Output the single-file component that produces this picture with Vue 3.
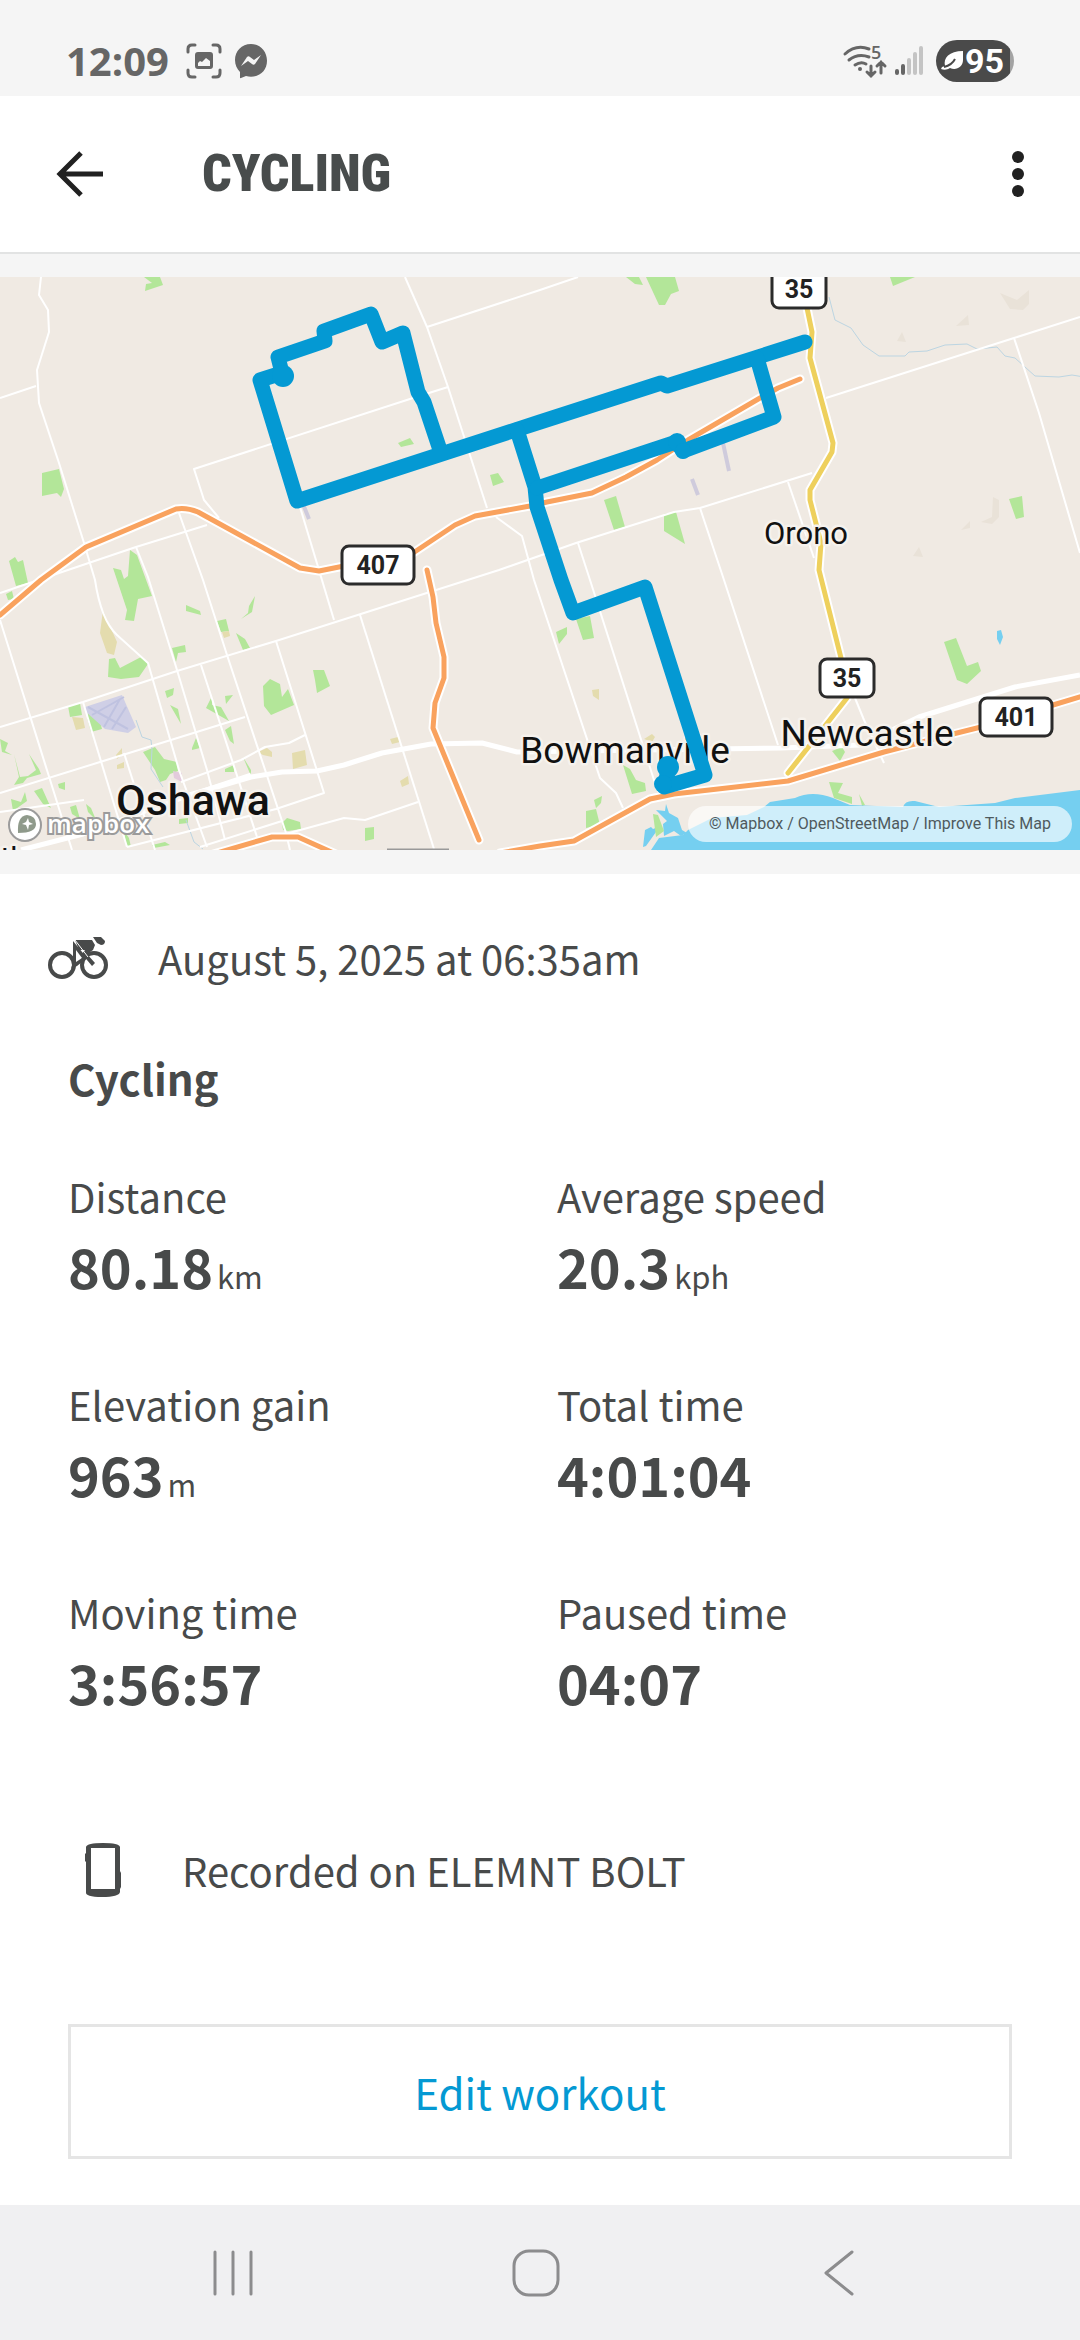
<template>
  <div class="screen">
    <div class="status-bar">
      <span class="clock">12:09</span>
      <svg class="icon-capture" viewBox="0 0 36 36" aria-hidden="true">
        <g fill="none" stroke="#666" stroke-width="3" stroke-linecap="round">
          <path d="M2 9V6q0-4 4-4h3M27 2h3q4 0 4 4v3M34 27v3q0 4-4 4h-3M9 34H6q-4 0-4-4v-3" />
        </g>
        <path fill="#666" fill-rule="evenodd" d="M12 9h12q3 0 3 3v11q0 3-3 3H12q-3 0-3-3V12q0-3 3-3zM12 23h12v-5l-4-3-4 4-2-1-2 2z" />
      </svg>
      <svg class="icon-messenger" viewBox="0 0 34 36" aria-hidden="true">
        <path fill="#666" d="M17 1C7.500 1 1 8 1 17c0 5 2 9 5 12v5.500q0 1 1 .5l5-2q2.500.7 5 .7c9.500 0 16-7 16-16S26.500 1 17 1z" />
        <path fill="#f5f5f5" d="M7 23l6-9q1.500-1.500 3 0l4 3 7-5-6 9q-1.500 1.500-3 0l-4-3z" />
      </svg>
      <span class="spacer"></span>
      <svg class="icon-wifi" viewBox="0 0 44 34" aria-hidden="true">
        <g fill="none" stroke="#666" stroke-width="3" stroke-linecap="round">
          <path d="M2 10Q13 0 26 5M6 16q9-7 20-3M12 21q6-4 11-1" />
          <path d="M28 22v10M24 28l4 4 4-4M38 29V18M34 22l4-4 4 4" />
        </g>
        <circle cx="17" cy="25" r="2" fill="#666" />
        <text x="28" y="15" class="wifi-band">5</text>
      </svg>
      <svg class="icon-signal" viewBox="0 0 28 30" aria-hidden="true">
        <path stroke="#666" stroke-width="4" stroke-linecap="round" d="M2 25v2M8 20v7" />
        <path stroke="#c4c4c4" stroke-width="4" stroke-linecap="round" d="M14 14v13M20 8v19M26 2v25" />
      </svg>
      <span class="battery">
        <svg viewBox="0 0 24 22" aria-hidden="true">
          <path fill="#fff" d="M22 1v9c0 7-7 11-13 8-3 2-6 2-9 1l1-2 3-1C2 8 8 1 22 1z" />
          <path fill="none" stroke="#4a4a4a" stroke-width="2" d="M3 17q8-2 11-8" />
        </svg>95
      </span>
    </div>

    <header class="app-bar">
      <button class="icon-button" type="button" aria-label="Back">
        <svg viewBox="0 0 48 48" class="icon-back">
          <path fill="none" stroke="#212121" stroke-width="5" d="M25 3L4 24l21 21M4 24h43" />
        </svg>
      </button>
      <h1>CYCLING</h1>
      <button class="icon-button" type="button" aria-label="More options">
        <svg viewBox="0 0 12 48" class="icon-more" fill="#212121">
          <circle cx="6" cy="7" r="6" />
          <circle cx="6" cy="24" r="6" />
          <circle cx="6" cy="41" r="6" />
        </svg>
      </button>
    </header>

    <section class="map">
      <svg class="map-canvas" viewBox="0 0 1080 573" role="img" aria-label="Route map">
        <rect width="1080" height="573" fill="#f0eae3" />

        <g fill="#b3e699">
          <path v-for="d in parks" :key="d" :d="d" />
        </g>
        <g fill="#e4dcae">
          <path v-for="d in fields" :key="d" :d="d" />
        </g>
        <g fill="#e9e2d8">
          <path d="M1000 16l17 7 12-10v14l-6 6-13-1zM956 49l12-11 1 10zM897 64l5-9 4 10zM981 245l11-5 1-20 6 3v17l-7 7zM961 253l9-9v7zM913 279l6-9 4 10z" />
        </g>
        <path fill="#cfcfe6" d="M85 430l37-12 14 32-8 6-23-4-20-18z" />
        <path fill="none" stroke="#bfc2e0" stroke-width="2" d="M88 430l40 22M92 438l32-18M104 450l16-28M112 452l14-22" />
        <path fill="none" stroke="#cfcbdc" stroke-width="4" d="M303 227l6 15M723 166l6 28M692 202l6 16" />
        <path fill="#e3cbdc" d="M173 494l9 2v9l-8-4z" />

        <g class="creek">
          <path d="M829 20l6 23 16 8 12 17 16 11h26l4-4 18-1 18-6 22-1 10 5 20-2 8 9 10 2 20 18 24 1 13-2 18 3" />
          <path d="M136 443l6 17 9 3 1 9-1 20 12 18M186 543l8 22 9 7" />
        </g>

        <g class="water">
          <path d="M651 573l8-12 24-3 5-5 24-12 35-3 17-8 6-5 25-4q17-8 38 0l17 7 53 2q2-7 12-6l24 6 56-4 20-5 65-8v60z" />
          <path d="M643 570l2-17 6-3 2 2 5-2-2 5-10 14zM656 533l9 1 1-7 3 9 9 5 4 12 5 3-6 3-7-5-10 5-1-12 4-3z" />
          <path d="M997 354l4-1 2 7-3 8-3-6z" />
        </g>
        <path fill="#b3e699" d="M653 537l5 1 6 16-8 6z" />
        <path fill="#b3e699" d="M829 505l14 1-5 10 14 4v7l-18-6z" />

        <g class="streets">
          <path v-for="d in streets" :key="d" :d="d" />
        </g>
        <g class="avenues">
          <path d="M21 573l62-16 103-38 65-19 31-5 35-1 27-6 38-12 49-9 51-1 35 9 60-1 204-3h0l80-3 58-28 96-30 65-12" />
          <path d="M155 530l96-32" />
        </g>

        <g v-for="road in highways" :key="road.d">
          <path class="casing" :d="road.d" />
          <path class="road" :class="road.kind" :d="road.d" />
        </g>

        <g class="town" text-anchor="middle">
          <text x="806" y="267" class="town-small">Orono</text>
          <text x="625" y="486">Bowmanville</text>
          <text x="867" y="469">Newcastle</text>
          <text x="193" y="538" class="town-large">Oshawa</text>
          <text x="10" y="592" class="town-small">ith</text>
        </g>
        <path stroke="#999" stroke-width="3" d="M387 573h62" />

        <g v-for="s in shields" :key="s.x" class="shield">
          <rect :x="s.x - s.w / 2" :y="s.y - 19" :width="s.w" height="38" rx="7" />
          <text :x="s.x" :y="s.y + 9" text-anchor="middle">{{ s.label }}</text>
        </g>

        <g class="route">
          <path d="M805 65L667 109l-6-3-121 39-243 79-37-121 22-7-4-16 47-16-1-10 47-17 11 28 21-9 15 59 6 10 16 48" />
          <path d="M517 153l18 57 2 20 24 73 12 33 72-26 60 188-41 12 5-20" />
          <path d="M537 211l139-46 7 9 91-34-17-59" />
        </g>
        <g fill="#0499d3">
          <circle cx="283" cy="99" r="11" />
          <circle cx="677" cy="165" r="9" />
          <circle cx="683" cy="174" r="8" />
          <circle cx="668" cy="490" r="11" />
          <circle cx="663" cy="507" r="9" />
        </g>

        <g class="mapbox-logo">
          <circle cx="25" cy="548" r="16" />
          <path fill="#8f9a8b" d="M18 556q-1-17 9-18 9 1 9 9 0 9-18 9z" />
          <path fill="#fff" d="M28 541l1 4 4 2-4 1-1 5-2-5-4-1 4-2z" />
          <text x="47" y="556">mapbox</text>
        </g>
      </svg>
      <div class="attribution">
        <a href="#">© Mapbox</a> / <a href="#">OpenStreetMap</a> / <a href="#">Improve This Map</a>
      </div>
    </section>

    <main class="details">
      <div class="summary">
        <svg viewBox="0 0 60 44" class="icon-bike" aria-hidden="true">
          <g fill="none" stroke="#484a4a" stroke-width="4">
            <circle cx="14" cy="29" r="12" />
            <circle cx="46" cy="29" r="12" />
          </g>
          <path fill="#484a4a" d="M27 4h17l3 5-2 5-6 4 8 9-3 3-10-12 3-4h-6z" />
          <path fill="#484a4a" fill-rule="evenodd" d="M25 5l14 17-10 8-6 3 2-7zM28 14v12l6-4zM45 1h8l4 4q0 4-4 4l-4-2z" />
          <path fill="none" stroke="#fff" stroke-width="1" d="M27 4l13 17" />
        </svg>
        <span>August 5, 2025 at 06:35am</span>
      </div>

      <h2>Cycling</h2>

      <dl class="stats">
        <div v-for="stat in stats" :key="stat.label">
          <dt>{{ stat.label }}</dt>
          <dd>{{ stat.value }}<span v-if="stat.unit" class="unit">{{ stat.unit }}</span></dd>
        </div>
      </dl>

      <div class="device">
        <svg viewBox="0 0 38 56" class="icon-device" aria-hidden="true">
          <path fill="#484a4a" fill-rule="evenodd" d="M2 5Q3 1 19 1t17 4v24l1 2v14l-1 2v3q-1 5-18 5T2 50V20l-1-1v-7l1-1zM7 6v41h24V6z" />
        </svg>
        <span>Recorded on ELEMNT BOLT</span>
      </div>

      <button class="edit-button" type="button">Edit workout</button>
    </main>

    <nav class="system-nav">
      <button type="button" aria-label="Recent apps">
        <svg viewBox="0 0 48 48"><path d="M6 3v42M24 3v42M42 3v42" /></svg>
      </button>
      <button type="button" aria-label="Home">
        <svg viewBox="0 0 48 48"><rect x="2" y="2" width="44" height="44" rx="15" /></svg>
      </button>
      <button type="button" aria-label="Back">
        <svg viewBox="0 0 48 48"><path d="M37 3L11 24l26 21" /></svg>
      </button>
    </nav>
  </div>
</template>

<script setup>
const stats = [
  { label: 'Distance', value: '80.18', unit: 'km' },
  { label: 'Average speed', value: '20.3', unit: 'kph' },
  { label: 'Elevation gain', value: '963', unit: 'm' },
  { label: 'Total time', value: '4:01:04' },
  { label: 'Moving time', value: '3:56:57' },
  { label: 'Paused time', value: '04:07' },
]

const shields = [
  { label: '35', x: 799, y: 12, w: 54 },
  { label: '407', x: 378, y: 288, w: 72 },
  { label: '35', x: 847, y: 401, w: 54 },
  { label: '401', x: 1016, y: 440, w: 72 },
]

const highways = [
  { kind: 'regional', d: 'M807 0v31l5 24-2 26 23 85-1 9-22 38v10l11 43-2 27 22 88 6 40-59 75' },
  { kind: 'toll', d: 'M0 338l41-35 45-33 90-38q10-2 22 3l102 56 19 3 25-5 69-13 42-28 20-9 55-10 17-4 45-9 34-16 31-17 31-20 72-42 18-10 22-9' },
  { kind: 'toll', d: 'M427 293l6 27 3 26 8 34v21l-9 25-2 25 46 112' },
  { kind: 'toll', d: 'M210 578l62-18h26l40 18' },
  { kind: 'toll', d: 'M500 576l40-7 34-5 76-42 24-5 114-13 96-29 69-18 28-7 72-22 30-9' },
]

const streets = [
  'M41 0l-2 18 9 15 1 22-12 38 2 33 20 60 25 80 11 37q6 40 22 55l31 28 31 107 28 77',
  'M0 121l36-12',
  'M405 0l22 50 21 60 39 121',
  'M427 50L540 13l38-13',
  'M448 110l-35 11-219 71 10 31 15 18',
  'M300 230l34 113',
  'M0 316l62-21 74-25 71-22',
  'M179 236l24 67 24 75 59 178 4 17',
  'M136 270l12 30 29 93 30 100 18 70',
  'M0 450l83-25 94-31 99-30 223-71 77-27 98-31 26-4 112-35',
  'M496 240l26 19 12 44 66 198 16 15 7 15',
  'M578 266l12 37 64 200 6 14',
  'M700 231l24 72 54 165',
  'M788 205l26 76',
  'M826 121l188-60 66-21',
  'M1014 61l25 75 41 140',
  'M0 343l72 230',
  'M360 338l74 234',
  'M276 364l48 152-48 16-149 38',
  'M83 425l44 145',
  'M0 516l100-31 145-45',
  'M201 388l56 172',
  'M124 476l31 97',
  'M418 525l-53 18-21-2-62 17',
  'M305 458l-16 8-24 4-24 13-60 22',
  'M0 535l84-12',
  'M200 570l82-26',
  'M855 421l9 22 20 43',
]

const parks = [
  'M144 0h16l3 8-18 6 1-7 6-1z',
  'M42 196l17-4 5 20-3 8-4-4-15 3z',
  'M398 166l12-5 4 6-13 3z',
  'M490 198l8-2 6 9-11 4z',
  'M9 284l6-4 3 5 5-2 5 23-12 3z',
  'M130 273l7 5 15 41-14 3-4 22-9-1 2-10-14-42 8 2 3 9 4-3z',
  'M6 317l6-3 2 8-6 1z',
  'M626 0h13l4 8-8-1zM646 0h29l4 14-8 3-6 11h-6z',
  'M890 0h25l-22 9z',
  'M604 223l12-4 9 31-11 3z',
  'M664 237l12-2 9 32-21-13z',
  'M1009 222l13-3 2 21-8 2z',
  'M556 355l11-5v7l-8 10zM576 342l14-3 4 22-11 2z',
  'M944 365l12-4 11 28 11-4 3 9-14 13-10-4z',
  'M109 382l6-1 5 10 21-11 7 7-9 13-18 2-13-2z',
  'M172 371l13-3 1 7-8 1-2 9z',
  'M217 344l9-2 3 12-8 1zM236 356l9 6 5 9-7 2zM255 319l-6 10-1 7-7 6 11-7z',
  'M186 328l14 6 1 4-15-4z',
  'M263 409l7-7 10 5 2 13 6-8 6 16-23 10-7-9z',
  'M313 393h11l6 16-13 7-2-13z',
  'M165 414l9-3-1 7-6 3zM170 428l8 4 3 15zM206 431l6-12v9l9 2 8 14zM225 419l8-1-7 9z',
  'M68 429l12-3 2 12-12 2zM88 433l10 4 4 15-11 3-4-14z',
  'M143 475l12-5 9 12 13 3 1 9-8 3-4 6-6 2-5-12-8-12z',
  'M192 471l4-10 4 10-8 2zM225 453l6-4 3 18-4-3zM225 492l9-4v7h-9zM243 480l8 13v6z',
  'M0 462l8 4-3 8 7 4-10-3z',
  'M14 477l6 23 8-1 8-6-7-16 10 15 2 5-14 4-4 5-9 2 5-8zM11 522l10 3 4-10 2 9-14 10zM34 514l8-3 9 20-8-4zM58 507l7-2v8l-6-2z',
  'M70 530l6-2 4 14-8-5zM86 527l5 4 5 12-8-8z',
  'M282 546l5-5 13 4 1 7-13 2-5-1z',
  'M365 551l9-1v12l-9 2z',
  'M152 568l13-3 5 3-16 3zM179 542l9-1v5l-9 1zM124 554l5 7 2 9-5-2z',
  'M623 488l7 4 6 11 9 3 1 8-14 3z',
  'M586 534l10-2 4 16-14 3zM594 523l8-4-1 7-5 5z',
  'M832 474l10-4 3 5-5 9z',
  'M859 517l6 11-3 1z',
]

const fields = [
  'M103 333l6 14 8 18-3 13-7-2-7-20z',
  'M72 440l11 1 2 10-9 2z',
  'M222 355l7-1 1 5-6 2z',
  'M258 475l9-4 5 4v5l-9-2zM292 476l13-3 2 15-14 4z',
  'M390 462l8-2 2 5-8 2zM400 504l8-5 1 8-7 3z',
  'M116 478l6-7v7l-5 4zM117 488l7-3v6l-7 1z',
  'M592 413l7-1v11l-6-4z',
  'M644 462l8-5 3 3-3 5z',
]
</script>

<style>
body {
  margin: 0;
  background: #fff;
}
</style>

<style scoped>
.screen {
  display: flex;
  flex-direction: column;
  min-height: 100vh;
  color: #484a4a;
  font-family: "Noto Sans CJK JP", "Noto Sans", sans-serif;
  font-size: 40px;
  line-height: 60px;
}
button {
  padding: 0;
  border: 0;
  background: none;
  font: inherit;
}
svg {
  display: block;
}

.status-bar {
  display: flex;
  align-items: center;
  box-sizing: border-box;
  height: 96px;
  padding: 26px 66px 0;
  background: #f5f5f5;
  color: #666;
}
.clock {
  margin-right: 17px;
  font-family: "Open Sans", sans-serif;
  font-size: 40px;
  font-weight: 700;
}
.spacer {
  flex: 1;
}
.icon-capture {
  width: 36px;
  margin-right: 12px;
}
.icon-messenger {
  width: 34px;
}
.icon-wifi {
  width: 44px;
  margin-right: 8px;
  overflow: visible;
}
.wifi-band {
  fill: #666;
  font: 600 18px "Open Sans", sans-serif;
}
.icon-signal {
  width: 28px;
  margin-right: 13px;
}
.battery {
  display: flex;
  align-items: center;
  box-sizing: border-box;
  width: 78px;
  height: 42px;
  padding-left: 5px;
  border-radius: 21px;
  background: linear-gradient(to right, #4a4a4a 74px, #a3a3a3 74px);
  color: #fff;
  font: 700 34px Roboto, sans-serif;
}
.battery svg {
  width: 24px;
}

.app-bar {
  display: flex;
  align-items: center;
  height: 156px;
  padding: 0 56px;
  border-bottom: 2px solid #e2e3e3;
  background: #fff;
}
.icon-back {
  width: 48px;
}
.icon-more {
  width: 12px;
}
h1 {
  flex: 1;
  margin: 0 0 0 98px;
  color: #484c4c;
  font-family: "Roboto Condensed", "Noto Sans CJK JP", sans-serif;
  font-size: 52px;
  font-weight: 900;
}

.map {
  position: relative;
  padding: 23px 0 24px;
  background: #f5f5f5;
}
.map-canvas {
  width: 100%;
}
.creek {
  fill: none;
  stroke: #bcd5e2;
  stroke-width: 1;
}
.water {
  fill: #75cff0;
}
.streets,
.avenues {
  fill: none;
  stroke: #fff;
  stroke-width: 2;
  stroke-linejoin: round;
}
.avenues {
  stroke-width: 5;
}
.casing,
.road {
  fill: none;
  stroke: #fff;
  stroke-width: 9;
  stroke-linecap: round;
  stroke-linejoin: round;
}
.road {
  stroke-width: 5;
}
.toll {
  stroke: #f9a25e;
}
.regional {
  stroke: #eed05d;
}
.route {
  fill: none;
  stroke: #0499d3;
  stroke-width: 15;
  stroke-linecap: round;
  stroke-linejoin: round;
}
.town {
  fill: #111;
  stroke: #f6f2ed;
  stroke-width: 5;
  stroke-linejoin: round;
  paint-order: stroke;
  font-family: Roboto, sans-serif;
  font-size: 37px;
}
.town-small {
  font-size: 31px;
}
.town-large {
  font-size: 43px;
  font-weight: 500;
}
.shield rect {
  fill: #fff;
  stroke: #2b2b2b;
  stroke-width: 3;
}
.shield text {
  fill: #222;
  font: 700 25px Roboto, sans-serif;
}
.mapbox-logo circle {
  fill: #fff;
  stroke: #9b9b9b;
  stroke-width: 2;
}
.mapbox-logo text {
  fill: #fff;
  stroke: #9b9b9b;
  stroke-width: 4;
  paint-order: stroke;
  font: 600 26px "Open Sans", sans-serif;
}
.attribution {
  position: absolute;
  right: 8px;
  bottom: 32px;
  padding: 0 21px;
  border-radius: 18px;
  background: rgba(255, 255, 255, 0.65);
  color: #4f5a5e;
  font: 16px/36px Roboto, sans-serif;
}
.attribution a {
  color: inherit;
  text-decoration: none;
}

.details {
  flex: 1;
  padding: 54px 68px 46px;
  background: #fff;
}
.summary {
  display: flex;
  align-items: center;
  margin-left: -20px;
}
.icon-bike {
  width: 60px;
  margin-right: 50px;
}
h2 {
  margin: 60px 0 58px;
  font-size: 42px;
  font-weight: 700;
}
.stats {
  display: grid;
  grid-template-columns: 1fr 1fr;
  gap: 68px 34px;
  margin: 0;
}
dd {
  margin: 0;
  font-size: 54px;
  font-weight: 700;
  line-height: 80px;
}
.unit {
  margin-left: 4px;
  font-size: 31px;
  font-weight: 400;
  line-height: 40px;
}
.device {
  display: flex;
  align-items: center;
  margin: 118px 0 124px 16px;
}
.icon-device {
  width: 38px;
  margin-right: 60px;
}
.edit-button {
  width: 100%;
  height: 135px;
  border: 3px solid #e5e5e5;
  color: #0499d3;
  font-size: 42px;
}

.system-nav {
  display: grid;
  grid-template-columns: 1fr 1fr 1fr;
  justify-items: center;
  align-items: center;
  height: 135px;
  padding: 0 90px 0 82px;
  background: #f0f0f2;
}
.system-nav svg {
  width: 48px;
  fill: none;
  stroke: #8c8c8e;
  stroke-width: 3;
  stroke-linecap: round;
  stroke-linejoin: round;
}
</style>
